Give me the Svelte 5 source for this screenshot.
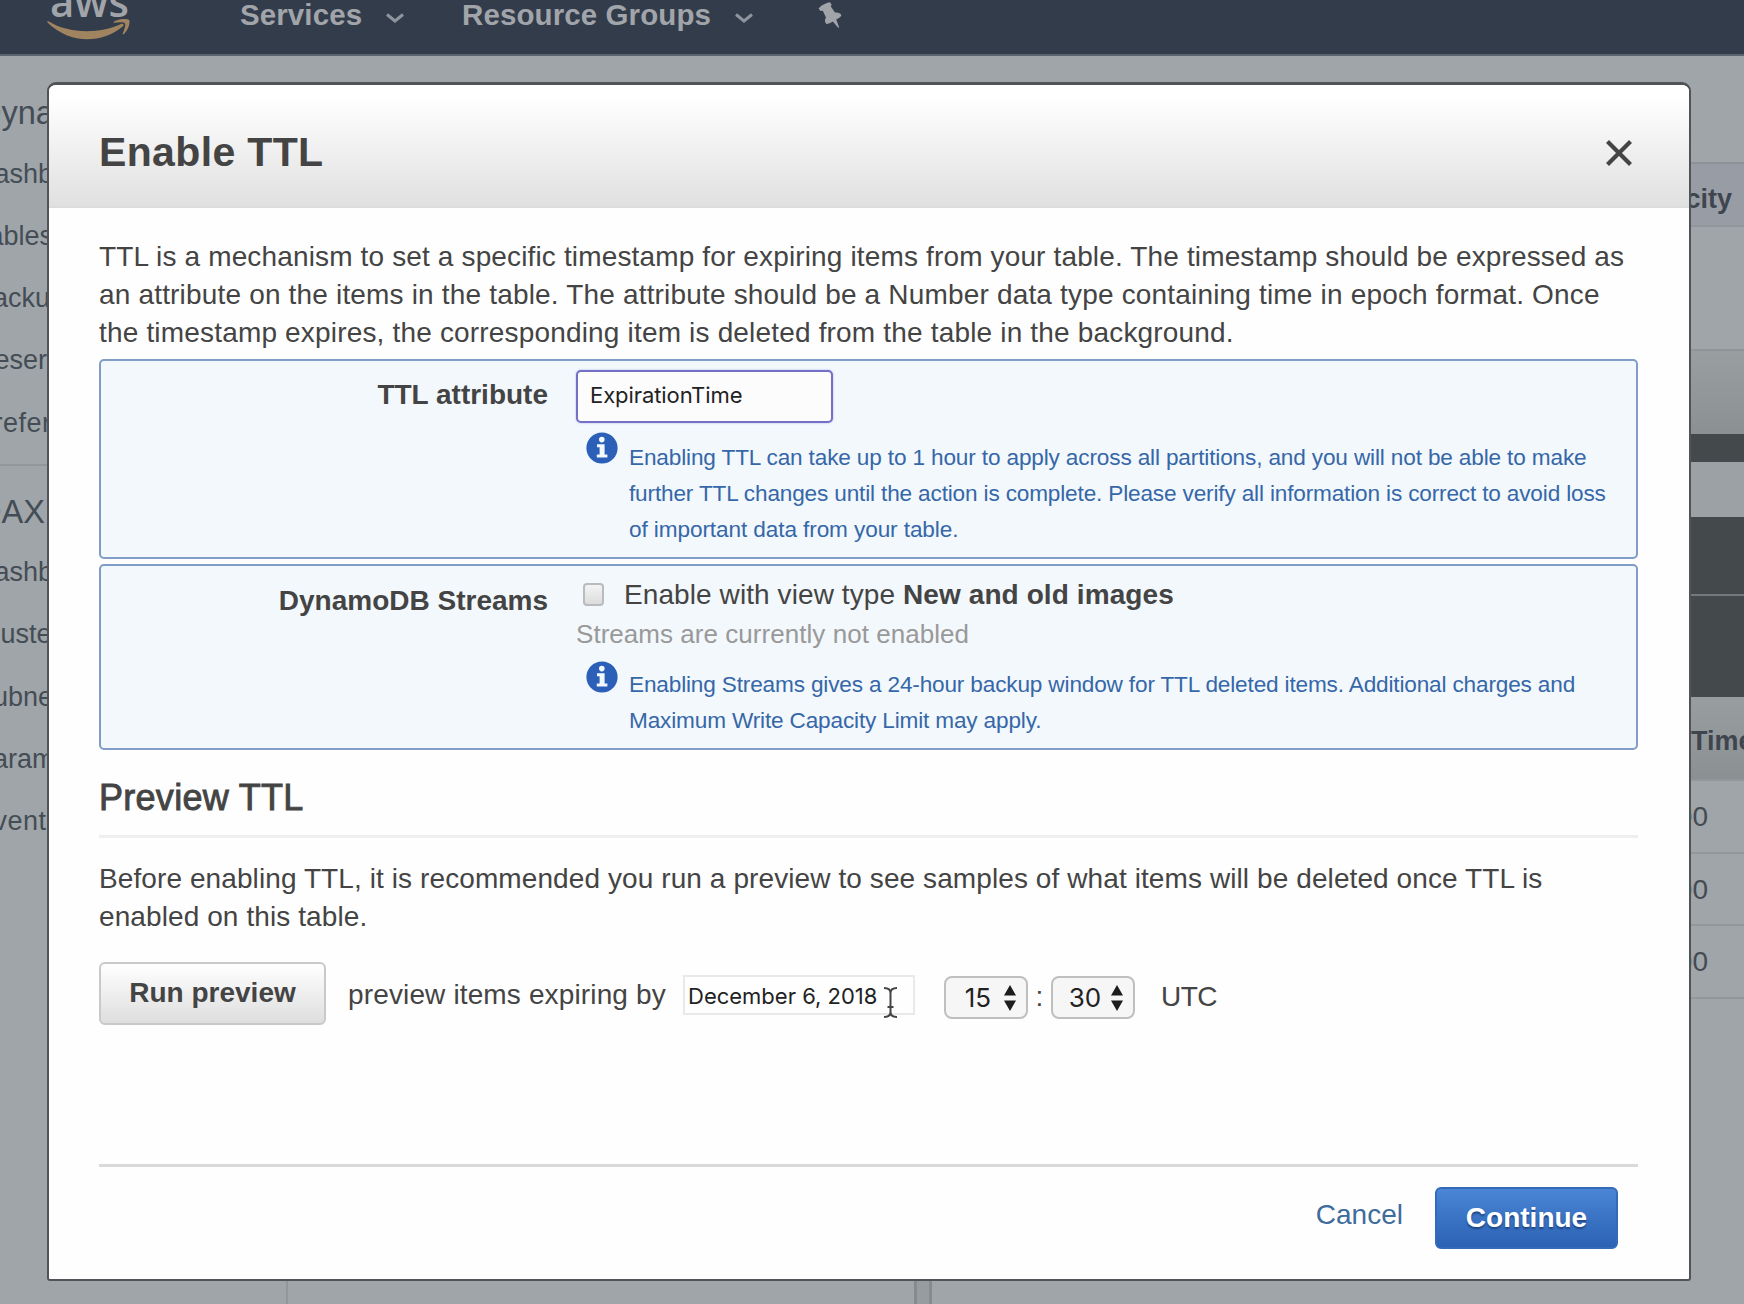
<script>
  const tableNav = ['Dashb', 'Tables', 'Backu', 'Reser', 'Prefer'];
  const daxNav = ['Dashb', 'Cluste', 'Subne', 'Param', 'Event'];
  const intro = [
    'TTL is a mechanism to set a specific timestamp for expiring items from your table. The timestamp should be expressed as',
    'an attribute on the items in the table. The attribute should be a Number data type containing time in epoch format. Once',
    'the timestamp expires, the corresponding item is deleted from the table in the background.'
  ];
  const ttlInfo = [
    'Enabling TTL can take up to 1 hour to apply across all partitions, and you will not be able to make',
    'further TTL changes until the action is complete. Please verify all information is correct to avoid loss',
    'of important data from your table.'
  ];
  const streamInfo = [
    'Enabling Streams gives a 24-hour backup window for TTL deleted items. Additional charges and',
    'Maximum Write Capacity Limit may apply.'
  ];
  const previewText = [
    'Before enabling TTL, it is recommended you run a preview to see samples of what items will be deleted once TTL is',
    'enabled on this table.'
  ];
  const rows = ['00', '00', '00'];
</script>

{#snippet chevron()}
  <svg class="chevron" width="18" height="12" viewBox="0 0 18 12"><path d="M1 2.5 L9 9 L17 2.5" /></svg>
{/snippet}

{#snippet info(lines)}
  <div class="info">
    <svg width="32" height="32" viewBox="0 0 32 32">
      <circle cx="16" cy="16" r="15.6" fill="#2b5fb8" />
      <circle cx="15.8" cy="7.6" r="2.8" fill="#f3f8fd" />
      <path d="M11 12.2 H18.6 V22.6 H21.4 V25.6 H10.8 V22.6 H13.6 V15.2 H11 Z" fill="#f3f8fd" />
    </svg>
    <p>{#each lines as line}<span>{line}</span>{/each}</p>
  </div>
{/snippet}

{#snippet stepper(value)}
  <div class="select">
    <span>{value}</span>
    <svg width="12" height="26" viewBox="0 0 12 26"><path d="M6 0 L12 10.5 H0 Z M6 26 L12 15.5 H0 Z" fill="#1d1d1d" /></svg>
  </div>
{/snippet}

<div class="page">
  <nav>
    <div class="logo">
      <span>aws</span>
      <svg width="84" height="22" viewBox="0 0 84 22">
        <path d="M1 2 C20 14 50 16 74 5 C76 4.2 77.5 5.6 76 7.2 C54 25.5 22 24.5 1 4 C0 2.8 0 1.6 1 2 Z" />
        <path d="M67 2.4 C73 -.8 81 -.4 82.2 1 C83.4 3 81.6 11 77 15 C76 15.8 75.4 15.2 75.8 14.2 C77 11 79 6 78 4.4 C76.6 2.8 71 3.4 68 3.8 C66.6 4 66 3.2 67 2.4 Z" />
      </svg>
    </div>
    <span class="item services">Services</span>
    {@render chevron()}
    <span class="item groups">Resource Groups</span>
    {@render chevron()}
    <svg class="pin" width="24" height="26" viewBox="0 0 24 26">
      <path d="M.6 6.4 C3 3.6 8 .6 12 .2 L13.6 2.6 L12.8 4.4 L17 10.6 C20 10.2 22.6 11 23.4 13.4 C22.4 15 20.4 16.4 18.2 17.6 L21.2 25.4 L20.2 25.8 L14.8 19.4 C12.6 20.6 10.4 21.8 8.4 22 C6.6 19.8 6.4 17.6 8 15.4 L4.8 8.8 L2.4 9 Z" />
    </svg>
  </nav>

  <div class="workspace">
    <aside>
      <h2>Dyna</h2>
      <ul>{#each tableNav as item}<li>{item}</li>{/each}</ul>
      <hr />
      <h2 class="dax">DAX</h2>
      <ul>{#each daxNav as item}<li>{item}</li>{/each}</ul>
    </aside>
    <section class="detail">
      <div class="columns"><b>city</b></div>
      <div class="blank"></div>
      <div class="toolbar"></div>
      <div class="dark thin"></div>
      <div class="gap"></div>
      <div class="dark upper"></div>
      <div class="dark lower"></div>
      <div class="columns time"><b>Time</b></div>
      {#each rows as row}<div class="row">{row}</div>{/each}
    </section>
  </div>
  <div class="panes"><div class="pane-left"></div><div class="pane-mid"></div><div class="splitter"></div></div>

  <div class="modal">
    <header>
      <h1>Enable TTL</h1>
      <svg width="28" height="28" viewBox="0 0 28 28"><path d="M2.5 2.5 L25.5 25.5 M25.5 2.5 L2.5 25.5" /></svg>
    </header>
    <div class="content">
      <p class="copy intro">{#each intro as line}<span>{line}</span>{/each}</p>

      <div class="box ttl">
        <b class="label">TTL attribute</b>
        <div class="field">
          <div class="input">ExpirationTime</div>
          {@render info(ttlInfo)}
        </div>
      </div>

      <div class="box streams">
        <b class="label">DynamoDB Streams</b>
        <div class="field">
          <div class="check"><i></i><span>Enable with view type <b>New and old images</b></span></div>
          <div class="muted">Streams are currently not enabled</div>
          {@render info(streamInfo)}
        </div>
      </div>

      <h3>Preview TTL</h3>
      <p class="copy preview">{#each previewText as line}<span>{line}</span>{/each}</p>

      <div class="run">
        <button class="grey">Run preview</button>
        <span class="by">preview items expiring by</span>
        <div class="date">
          <span>December 6, 2018</span>
          <svg width="15" height="31" viewBox="0 0 15 31"><path d="M1 1 C5 1 7.5 3 7.5 6 V25 C7.5 28 5 30 1 30 M14 1 C10 1 7.5 3 7.5 6 M7.5 25 C7.5 28 10 30 14 30 M4.5 20 H10.5" /></svg>
        </div>
        {@render stepper('15')}
        <span class="colon">:</span>
        {@render stepper('30')}
        <span class="utc">UTC</span>
      </div>

      <footer>
        <a href="#cancel">Cancel</a>
        <button class="blue">Continue</button>
      </footer>
    </div>
  </div>
</div>

<style>
  :global(body) { margin: 0; overflow: hidden; }
  .page, .page * { box-sizing: border-box; }
  .page {
    position: relative;
    width: 1744px;
    height: 1304px;
    overflow: hidden;
    background: #a0a5a9;
    color: #444;
    font: 28px/38.2px 'Liberation Sans', Arial, sans-serif;
  }
  h1, h2, h3, p, ul { margin: 0; padding: 0; }
  svg { display: block; flex: none; }

  nav {
    display: flex;
    height: 56px;
    padding-left: 47px;
    background: #333c4a;
    border-bottom: 2px solid #5b636e;
    color: #a1a5aa;
    align-items: flex-start;
  }
  .logo { width: 193px; height: 42px; overflow: hidden; }
  .logo span { display: block; height: 19px; margin-left: 3px; font: 600 42px/1px 'Open Sans', sans-serif; }
  .logo svg path { fill: #a08460; }
  .item { font-weight: 700; font-size: 29.5px; line-height: 29px; white-space: nowrap; }
  .services { width: 146px; letter-spacing: 0.1px; }
  .groups { width: 273px; margin-left: 57px; letter-spacing: 0.1px; }
  .chevron { margin-top: 12px; }
  .chevron path { fill: none; stroke: #8f959d; stroke-width: 3; }
  .pin { margin: 2px 0 0 65px; fill: #a1a5aa; }
  .services + .chevron { margin-right: 1px; }

  .workspace { display: flex; justify-content: space-between; height: 1094px; }
  aside { width: 293px; margin-left: -25px; padding-top: 19px; color: #444d55; }
  h2 { height: 78.5px; padding-left: 3px; font-size: 32.5px; font-weight: 400; line-height: 76px; }
  .dax { height: 86px; padding-top: 8px; }
  ul { list-style: none; font-size: 27px; }
  li { height: 62.3px; line-height: 40px; }
  li:last-child { letter-spacing: 0.5px; }
  hr { height: 2px; margin: -1px 0 0; border: 0; background: #92979b; }

  .detail { width: 813px; padding-top: 106px; text-align: right; }
  .columns { height: 65px; padding-right: 12px; border-top: 2px solid #8d9297; background: #989da5; color: #3f454e; line-height: 70px; border-bottom: 2px solid #91969a; }
  .columns b { font-size: 27px; }
  .blank { height: 124px; border-bottom: 2px solid #8f9498; }
  .toolbar { height: 83px; background: linear-gradient(#999fa1, #8b9193); }
  .dark { background: #44494c; }
  .thin { height: 28px; }
  .gap { height: 55px; background: #9ba1a5; }
  .upper { height: 79px; border-bottom: 2px solid #73797c; }
  .lower { height: 101px; }
  .time { height: 84px; padding: 0 0 0 760px; text-align: left; border-top: 0; background: linear-gradient(#989ea0, #8b9193); line-height: 88px; white-space: nowrap; }
  .row { height: 72.7px; padding-right: 36px; border-bottom: 2px solid #92979b; color: #444b51; line-height: 72px; }

  .panes { display: flex; height: 154px; }
  .pane-left { width: 288px; border-right: 2px solid #92979c; }
  .pane-mid { width: 626px; }
  .splitter { width: 18px; background: #979ca0; border: solid #868b8f; border-width: 0 3px; }

  .modal {
    position: absolute;
    left: 47px;
    top: 82px;
    width: 1644px;
    height: 1199px;
    border: 2px solid #505358;
    border-top-width: 3px;
    border-radius: 9px 9px 3px 3px;
    background: #fefefe;
    overflow: hidden;
  }
  header {
    display: flex;
    justify-content: space-between;
    height: 123px;
    padding: 45px 56px 0 50px;
    background: linear-gradient(#fff 10%, #e0e0e0);
    border-bottom: 2px solid #dcdcdc;
  }
  h1 { font-size: 41px; line-height: 45px; color: #444; letter-spacing: 0.35px; }
  header svg { margin-top: 9px; }
  header path { stroke: #444; stroke-width: 4.2; }

  .content { width: 1539px; margin-left: 50px; }
  .copy span, .info span { display: block; white-space: nowrap; }
  .intro { height: 151px; padding-top: 30px; letter-spacing: 0.175px; }
  .intro span:first-child { letter-spacing: 0.145px; }

  .box { display: flex; gap: 28px; border: 2px solid #7f9dc6; border-radius: 5px; background: #f2f8fc; }
  .ttl { height: 200px; padding-top: 9px; }
  .label { width: 447px; text-align: right; white-space: nowrap; }
  .ttl .label { padding-top: 6px; }
  .input {
    width: 257px;
    height: 53px;
    padding-left: 12px;
    border: 2px solid #7370c6;
    border-radius: 5px;
    background: #fcfcfc;
    box-shadow: 0 0 2px #a9a8e0;
    color: #222;
    font: 22px/47px Inter, sans-serif;
    letter-spacing: -0.08px;
  }
  .info { display: flex; gap: 11px; padding-left: 10px; color: #3667a8; }
  .info p { padding-top: 15px; font-size: 22.6px; line-height: 36.3px; letter-spacing: -0.16px; }
  .ttl .info { padding-top: 9px; }
  .ttl .info p { padding-top: 7.5px; }
  .ttl .info span:first-child { letter-spacing: -0.148px; }
  .ttl .info span:last-child { letter-spacing: -0.1px; }

  .streams { height: 186px; margin-top: 5px; }
  .streams .label { padding-top: 16px; }
  .check { display: flex; align-items: center; height: 58px; gap: 20px; padding-left: 7px; white-space: nowrap; letter-spacing: 0.09px; }
  .check i { width: 21px; height: 23px; margin-top: -2px; border: 2px solid #b9bbbe; border-radius: 4px; background: linear-gradient(#f4f4f4, #dcdcdc); }
  .muted { height: 37px; color: #999; font-size: 26px; letter-spacing: 0.04px; line-height: 20px; white-space: nowrap; }
  .streams .info p { padding-top: 6px; }

  h3 { height: 88px; padding-top: 27px; border-bottom: 3px solid #efefef; font-size: 36px; font-weight: 400; line-height: 42px; letter-spacing: 0.28px; -webkit-text-stroke: 0.9px #444; }
  .preview { height: 124px; padding-top: 22px; letter-spacing: 0.093px; }

  .run { display: flex; align-items: flex-start; height: 202px; white-space: nowrap; }
  button { font: 700 28px/58px 'Liberation Sans', Arial, sans-serif; padding: 0; border-radius: 6px; }
  .grey { width: 227px; height: 63px; padding-bottom: 2px; border: 2px solid #c9c9c9; background: linear-gradient(#fff, #dedede); color: #444; line-height: 57px; }
  .by { width: 335px; margin: 14px 0 0 22px; letter-spacing: 0.14px; }
  .date { display: flex; width: 232px; height: 40px; margin-top: 13px; padding-left: 3px; border: 2px solid #e9e9e9; gap: 6px; color: #222; font: 22px/38px Inter, sans-serif; }
  .date svg { margin-top: 10px; }
  .date path { fill: none; stroke: #444; stroke-width: 2; }
  .select { display: flex; width: 84px; height: 43px; margin-top: 14px; padding-left: 15px; gap: 9px; align-items: center; border: 2px solid #bfbfbf; border-radius: 8px; background: #f6f6f6; color: #222; font: 26px/38px Inter, sans-serif; }
  .select span { width: 34px; text-align: center; }
  .date + .select { margin-left: 29px; }
  .colon { width: 23px; margin-top: 16px; text-align: center; }
  .utc { margin: 16px 0 0 26px; letter-spacing: -0.5px; }

  footer { display: flex; justify-content: flex-end; gap: 32px; padding: 20px 20px 0 0; border-top: 3px solid #d9d9d9; }
  a { padding-top: 9px; color: #3f6c9c; text-decoration: none; }
  .blue { width: 183px; height: 62px; border: 2px solid #346bb8; background: linear-gradient(#4a85d6, #2c62b3); color: #fff; line-height: 58px; text-shadow: 0 2px 2px #1f4480; }
</style>
